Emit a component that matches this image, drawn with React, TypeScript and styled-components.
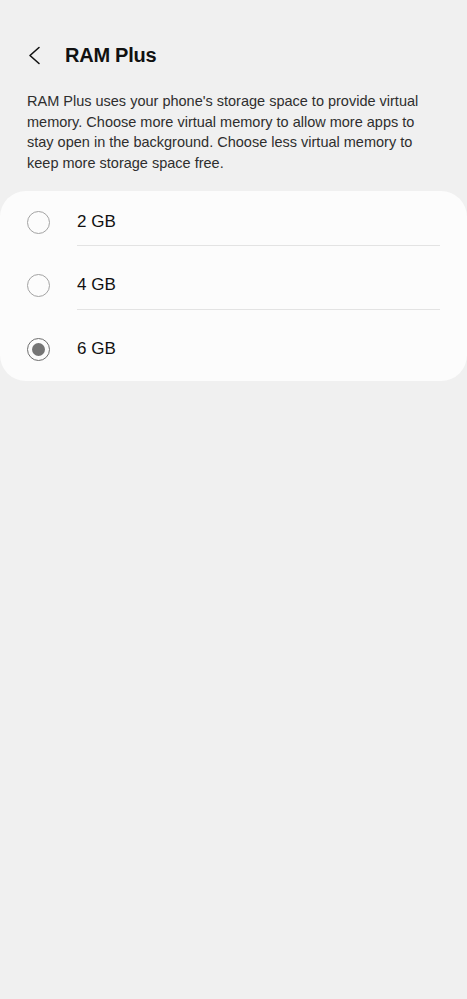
import React, { useState } from "react";
import styled, { createGlobalStyle } from "styled-components";

const Global = createGlobalStyle`
  html, body { margin: 0; padding: 0; background: #f0f0f0; }
  body { font-family: "Liberation Sans", Arial, sans-serif; }
  * { box-sizing: border-box; }
`;

const Page = styled.div`
  width: 467px;
  min-height: 999px;
  background: #f0f0f0;
  display: flex;
  flex-direction: column;
`;

const Header = styled.header`
  display: flex;
  align-items: center;
  height: 56px;
  margin-top: 27px;
  padding-left: 27px;
  gap: 20px;
`;

const BackButton = styled.button`
  width: 18px;
  height: 24px;
  padding: 0;
  border: none;
  background: none;
  display: flex;
  align-items: center;
  justify-content: flex-start;
  color: #111;
`;

const Title = styled.h1`
  margin: 0;
  font-size: 20px;
  font-weight: 700;
  color: #111;
  letter-spacing: -0.25px;
`;

const Description = styled.p`
  margin: 8px 0 0;
  padding: 0 27px;
  font-size: 14.5px;
  line-height: 20.7px;
  color: #2e2e2e;
`;

const Card = styled.section`
  margin-top: 17px;
  background: #fcfcfc;
  border-radius: 26px;
  display: flex;
  flex-direction: column;
`;

const Row = styled.label`
  display: flex;
  align-items: stretch;
  height: 63.4px;
  padding-left: 27px;
  cursor: pointer;
`;

const RadioBox = styled.span`
  width: 50px;
  display: flex;
  align-items: center;
`;

const Radio = styled.span<{ $checked: boolean }>`
  width: 23px;
  height: 23px;
  border-radius: 50%;
  border: 1.5px solid ${(p) => (p.$checked ? "#6e6e6e" : "#a3a3a3")};
  display: flex;
  align-items: center;
  justify-content: center;
  &::after {
    content: "";
    width: 13px;
    height: 13px;
    border-radius: 50%;
    background: #757575;
    display: ${(p) => (p.$checked ? "block" : "none")};
  }
`;

const RowText = styled.span<{ $divider: boolean }>`
  flex: 1;
  margin: 0 27px 8px 0;
  padding-top: 8px;
  display: flex;
  align-items: center;
  font-size: 17px;
  color: #111;
  border-bottom: 1px solid ${(p) => (p.$divider ? "#e3e3e3" : "transparent")};
`;

const options = ["2 GB", "4 GB", "6 GB"];

export default function App() {
  const [selected, setSelected] = useState(2);
  return (
    <Page>
      <Global />
      <Header>
        <BackButton aria-label="Back">
          <svg width="14" height="19" viewBox="0 0 14 19" fill="none">
            <path d="M12 1.5 L3 9.5 L12 17.5" stroke="#111" strokeWidth="1.6" strokeLinecap="round" strokeLinejoin="round" />
          </svg>
        </BackButton>
        <Title>RAM Plus</Title>
      </Header>
      <Description>
        RAM Plus uses your phone's storage space to provide virtual memory. Choose more virtual memory to allow more apps to stay open in the background. Choose less virtual memory to keep more storage space free.
      </Description>
      <Card>
        {options.map((o, i) => (
          <Row key={o} onClick={() => setSelected(i)}>
            <RadioBox>
              <Radio $checked={selected === i} />
            </RadioBox>
            <RowText $divider={i < options.length - 1}>{o}</RowText>
          </Row>
        ))}
      </Card>
    </Page>
  );
}
